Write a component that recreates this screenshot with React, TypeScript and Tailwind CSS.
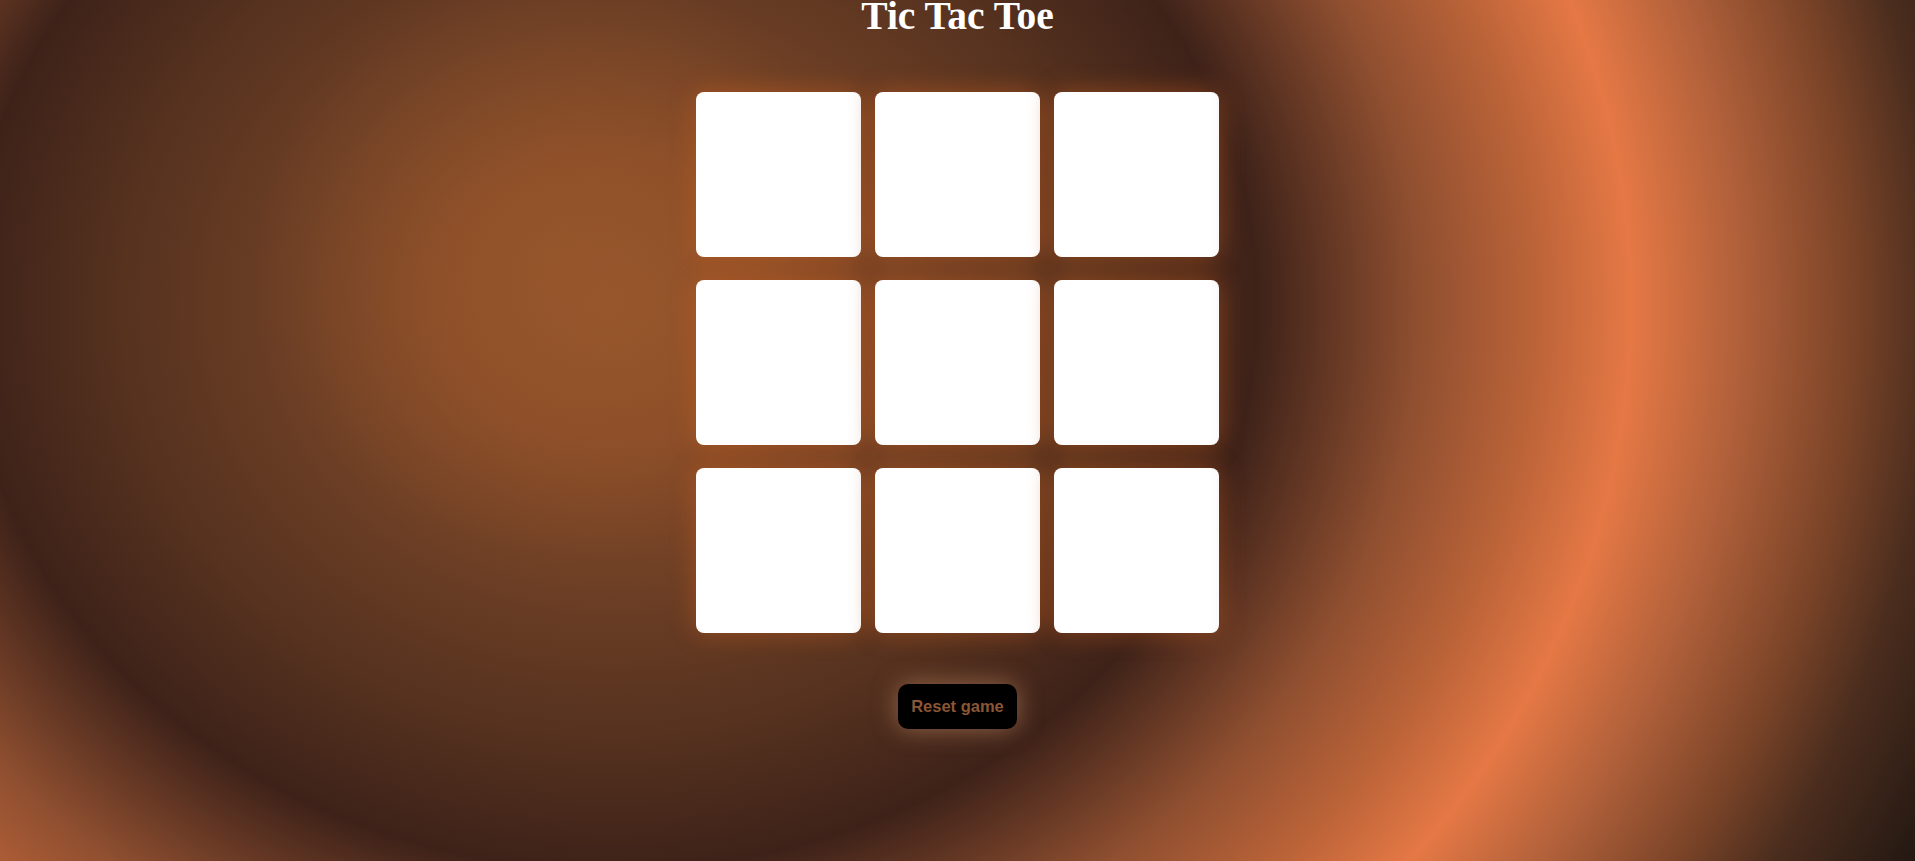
const cells = Array.from({ length: 9 }, (_, i) => i);

export default function App() {
  return (
    <div className="min-h-screen w-full flex flex-col items-center bg-[radial-gradient(circle_at_556px_256px,rgba(154,88,44,0.55)_0px,rgba(154,88,44,0)_300px),radial-gradient(ellipse_645px_565px_at_612px_305px,#96552b_0%,#8a4d28_25%,#6d3f25_50%,#56321f_76%,#3e2219_100%,#8f4f30_125%,#bb6338_143%,#e57845_158%,#b0603a_175%,#7b4428_192%,#4b2d1e_205%,#1c1410_228%)]">
      <h1 className="text-white font-bold text-[39.5px] leading-[32px] font-['Liberation_Serif',serif]">
        Tic Tac Toe
      </h1>

      <div className="mt-[60px] grid grid-cols-[repeat(3,165px)] gap-x-[14px] gap-y-[23px]">
        {cells.map((cell) => (
          <div
            key={cell}
            className="h-[165px] w-[165px] rounded-[8px] bg-white shadow-[0_0_26px_rgba(215,100,30,0.45),inset_-8px_0_10px_-8px_rgba(120,80,60,0.08)]"
          />
        ))}
      </div>

      <button className="mt-[51px] h-[45px] px-[13px] rounded-[10px] bg-black text-[#8b5634] font-bold text-[16.5px] font-['Liberation_Sans',Arial,sans-serif] shadow-[0_0_24px_rgba(205,150,110,0.55)]">
        Reset game
      </button>
    </div>
  );
}
